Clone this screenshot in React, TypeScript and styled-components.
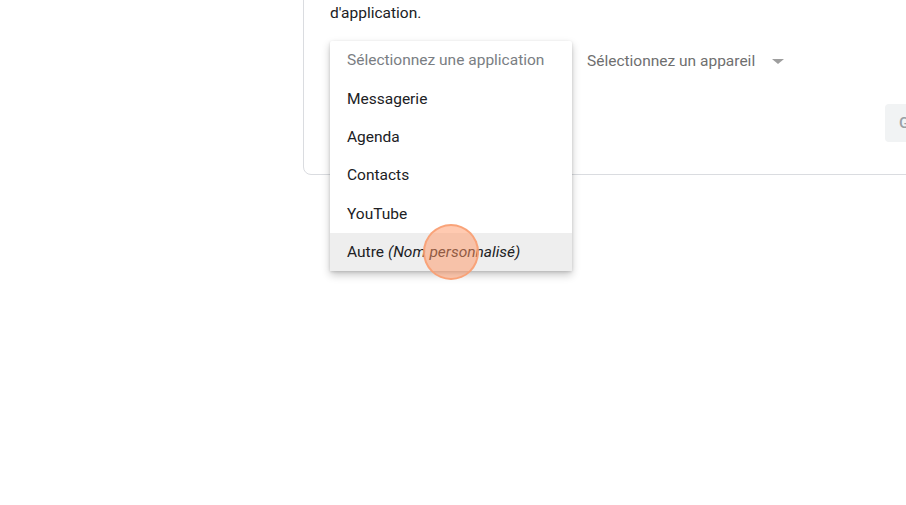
import React from "react";
import styled, { createGlobalStyle } from "styled-components";

const Global = createGlobalStyle`
  html, body {
    margin: 0;
    padding: 0;
    background: #ffffff;
    overflow: hidden;
    width: 906px;
    height: 505px;
  }
  body {
    font-family: Roboto, "Liberation Sans", Arial, sans-serif;
    font-size: 15.5px;
    color: #202124;
  }
`;

const Page = styled.div`
  position: relative;
  width: 906px;
  height: 505px;
  overflow: hidden;
`;

const Card = styled.section`
  margin-left: 303px;
  margin-top: -39px;
  width: 719px;
  box-sizing: border-box;
  border: 1px solid #dadce0;
  border-radius: 8px;
  padding: 20px 26px 32px 26px;
`;

const Intro = styled.p`
  margin: 0;
  font-size: 15.5px;
  line-height: 21px;
  color: #202124;
  white-space: nowrap;
`;

const SelectRow = styled.div`
  display: flex;
  align-items: center;
  margin-top: 18px;
  height: 38.4px;
`;

const SelectSlot = styled.div`
  position: relative;
  width: 242px;
  height: 38.4px;
`;

const DeviceSelect = styled.div`
  display: flex;
  align-items: center;
  margin-left: 15px;
  gap: 17px;
  color: #6f6f6f;
  font-size: 15.5px;
`;

const Caret = styled.span`
  width: 0;
  height: 0;
  border-left: 6px solid transparent;
  border-right: 6px solid transparent;
  border-top: 5px solid #9e9e9e;
  margin-top: 1px;
`;

const Menu = styled.ul`
  position: absolute;
  top: -1px;
  left: 0;
  width: 242px;
  margin: 0;
  padding: 0;
  list-style: none;
  background: #ffffff;
  border-radius: 2px;
  box-shadow: 0 4px 9px rgba(0, 0, 0, 0.22), 0 1px 3px rgba(0, 0, 0, 0.14);
  z-index: 2;
`;

const MenuItem = styled.li<{ $muted?: boolean; $active?: boolean }>`
  display: flex;
  align-items: center;
  height: 38.4px;
  padding: 0 17px;
  font-size: 15.5px;
  color: ${(p) => (p.$muted ? "#7a7e83" : "#202124")};
  background: ${(p) => (p.$active ? "#eeeeee" : "transparent")};
  white-space: nowrap;
`;

const Em = styled.em`
  font-style: italic;
  margin-left: 4px;
`;

const ActionRow = styled.div`
  display: flex;
  justify-content: flex-end;
  margin-top: 24px;
`;

const GenerateButton = styled.button`
  width: 110px;
  height: 38px;
  border: none;
  border-radius: 4px;
  background: #f1f3f4;
  color: #9aa0a6;
  font-family: Roboto, "Liberation Sans", Arial, sans-serif;
  font-size: 15.5px;
  font-weight: 500;
  letter-spacing: 0.25px;
  text-align: left;
  padding: 0 14px;
  white-space: nowrap;
`;

const ClickMarker = styled.div`
  position: absolute;
  left: 423px;
  top: 224px;
  width: 56px;
  height: 56px;
  box-sizing: border-box;
  border-radius: 50%;
  background: rgba(255, 150, 100, 0.5);
  border: 2px solid rgba(248, 160, 115, 0.9);
  z-index: 3;
`;

export default function App() {
  return (
    <Page>
      <Global />
      <Card>
        <Intro>
          Sélectionnez l'application et l'appareil pour lesquels vous voulez générer un mot de passe
          <br />
          d'application.
        </Intro>
        <SelectRow>
          <SelectSlot>
            <Menu>
              <MenuItem $muted>Sélectionnez une application</MenuItem>
              <MenuItem>Messagerie</MenuItem>
              <MenuItem>Agenda</MenuItem>
              <MenuItem>Contacts</MenuItem>
              <MenuItem>YouTube</MenuItem>
              <MenuItem $active>
                Autre<Em>(Nom personnalisé)</Em>
              </MenuItem>
            </Menu>
          </SelectSlot>
          <DeviceSelect>
            Sélectionnez un appareil
            <Caret />
          </DeviceSelect>
        </SelectRow>
        <ActionRow>
          <GenerateButton>GÉNÉRER</GenerateButton>
        </ActionRow>
      </Card>
      <ClickMarker />
    </Page>
  );
}
